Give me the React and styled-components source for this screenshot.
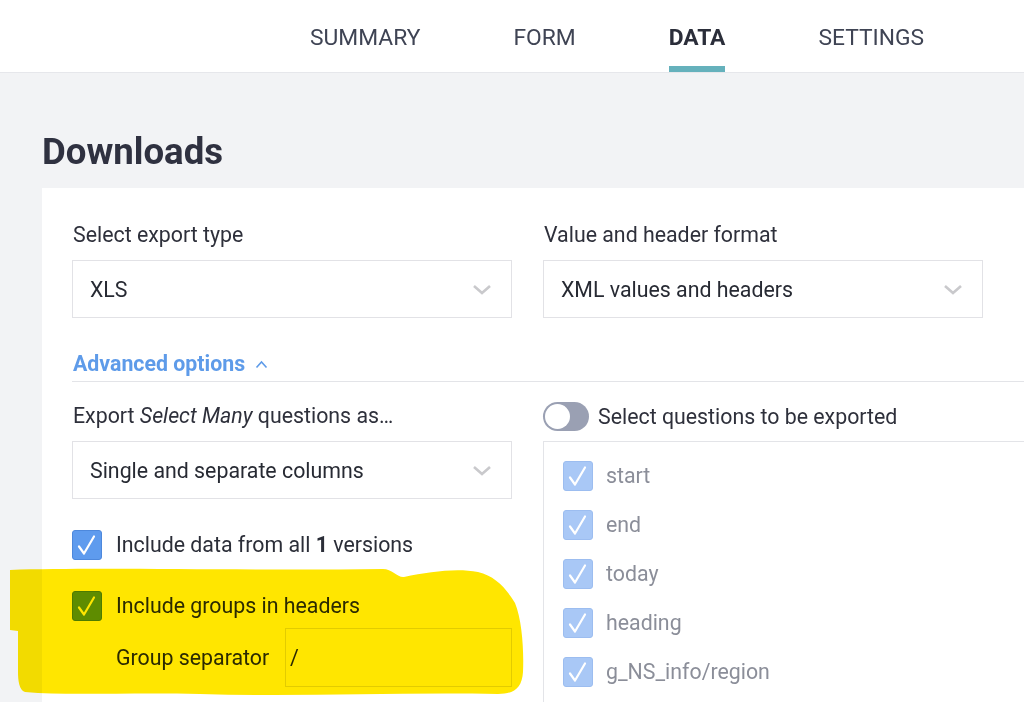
import styled, { createGlobalStyle } from "styled-components";

const GlobalStyle = createGlobalStyle`
  html, body {
    margin: 0;
    padding: 0;
    background: #f2f3f5;
    font-family: Roboto, "Liberation Sans", sans-serif;
    overflow: hidden;
  }
  * { box-sizing: border-box; }
`;

const Page = styled.div`
  position: relative;
  width: 1024px;
  height: 702px;
  overflow: hidden;
`;

const Header = styled.nav`
  height: 73px;
  background: #fff;
  border-bottom: 1px solid #e6e7eb;
  display: flex;
  padding-left: 310px;
  gap: 93px;
`;

const Tab = styled.div`
  height: 72px;
  padding-top: 2px;
  display: flex;
  align-items: center;
  font-size: 22.8px;
  color: ${(p) => (p.$active ? "#2b2e3a" : "#3f4454")};
  font-weight: ${(p) => (p.$active ? 700 : 400)};
  box-shadow: ${(p) => (p.$active ? "inset 0 -6px 0 #65b1bc" : "none")};
`;

const Main = styled.main`
  padding: 57px 0 0 42px;
`;

const Title = styled.h1`
  margin: 0 0 14px;
  font-size: 36.6px;
  line-height: 44px;
  font-weight: 700;
  color: #2f3140;
`;

const Card = styled.section`
  background: #fff;
  width: 1040px;
  padding: 35px 0 0 30px;
  height: 560px;
  font-size: 21.33px;
`;

const Columns = styled.div`
  display: grid;
  grid-template-columns: ${(p) => (p.$wide ? "440px 1fr" : "440px 440px")};
  column-gap: 31px;
`;

const Field = styled.div`
  display: flex;
  flex-direction: column;
`;

const Label = styled.div`
  line-height: 24px;
  color: #2e303b;
  margin-bottom: 13px;
  padding-left: 1px;
`;

const Select = styled.div`
  height: 58px;
  border: 1px solid #e2e2e6;
  display: flex;
  align-items: center;
  justify-content: space-between;
  padding: 0 19px 0 17px;
  color: #272a33;
`;

const Advanced = styled.div`
  margin-top: 34px;
  padding: 0 0 5px 1px;
  border-bottom: 1px solid #e3e4e8;
  display: flex;
  align-items: center;
  gap: 10px;
  line-height: 24px;
  font-weight: 700;
  color: #5e9be9;
  margin-bottom: 22px;
`;

const ToggleRow = styled.div`
  display: flex;
  align-items: center;
  gap: 9px;
  height: 29px;
  margin-top: -2px;
  margin-bottom: 10px;
  color: #2e303b;
`;

const Track = styled.div`
  width: 46px;
  height: 29px;
  border-radius: 15px;
  background: #9aa0b3;
  padding: 2px;
  display: flex;
`;

const Knob = styled.div`
  width: 25px;
  height: 25px;
  border-radius: 50%;
  background: #fff;
`;

const Checks = styled.div`
  display: flex;
  flex-direction: column;
  gap: 32px;
  margin-top: 31px;
`;

const CheckRow = styled.div`
  display: flex;
  align-items: center;
  gap: ${(p) => (p.$muted ? "13px" : "14px")};
  height: 29px;
  color: ${(p) => (p.$muted ? "#8b8e99" : "#2b2e38")};
`;

const Box = styled.div`
  width: 30px;
  height: 30px;
  border-radius: 3px;
  flex: none;
  display: flex;
  align-items: center;
  justify-content: center;
  background: ${(p) => (p.$muted ? "#a9c8f6" : "#5e9bee")};
  border: 1px solid ${(p) => (p.$muted ? "#9cbdf0" : "#4d88dc")};
`;

const SepRow = styled.div`
  display: flex;
  align-items: center;
  margin-top: -24px;
  padding-left: 44px;
  color: #2b2e38;
`;

const SepLabel = styled.span`
  width: 169px;
`;

const SepInput = styled.div`
  width: 227px;
  height: 59px;
  border: 1px solid #e2e2e6;
  display: flex;
  align-items: center;
  padding-left: 4px;
`;

const QuestionBox = styled.div`
  border: 1px solid #e3e4e8;
  border-right: none;
  padding: 19px 0 0 19px;
  display: flex;
  flex-direction: column;
  gap: 20px;
  height: 300px;
`;

const Highlight = styled.svg`
  position: absolute;
  top: 0;
  left: 0;
  pointer-events: none;
  mix-blend-mode: multiply;
`;

const Chevron = () => (
  <svg width="20" height="11" viewBox="0 0 20 11">
    <path d="M2 2 L10 9 L18 2" fill="none" stroke="#c9c9cc" strokeWidth="2.6" />
  </svg>
);

const Caret = () => (
  <svg width="13" height="9" viewBox="0 0 13 9">
    <path d="M1.5 7.5 L6.5 2 L11.5 7.5" fill="none" stroke="#5e9be9" strokeWidth="1.6" />
  </svg>
);

const Checkbox = ({ muted }) => (
  <Box $muted={muted}>
    <svg width="22" height="22" viewBox="0 0 22 22">
      <path d="M3 12.5 L8 19.5 L18 2.5" fill="none" stroke="#fff" strokeWidth="2.2" strokeLinecap="round" strokeLinejoin="round" />
    </svg>
  </Box>
);

const questions = ["start", "end", "today", "heading", "g_NS_info/region"];

const App = () => (
  <Page>
    <GlobalStyle />
    <Header>
      <Tab>SUMMARY</Tab>
      <Tab>FORM</Tab>
      <Tab $active>DATA</Tab>
      <Tab>SETTINGS</Tab>
    </Header>
    <Main>
      <Title>Downloads</Title>
      <Card>
        <Columns>
          <Field>
            <Label>Select export type</Label>
            <Select>
              XLS
              <Chevron />
            </Select>
          </Field>
          <Field>
            <Label>Value and header format</Label>
            <Select>
              XML values and headers
              <Chevron />
            </Select>
          </Field>
        </Columns>
        <Advanced>
          Advanced options
          <Caret />
        </Advanced>
        <Columns $wide>
          <Field>
            <Label>
              Export <i>Select Many</i> questions as…
            </Label>
            <Select>
              Single and separate columns
              <Chevron />
            </Select>
            <Checks>
              <CheckRow>
                <Checkbox />
                <span>
                  Include data from all <b>1</b> versions
                </span>
              </CheckRow>
              <CheckRow>
                <Checkbox />
                Include groups in headers
              </CheckRow>
              <SepRow>
                <SepLabel>Group separator</SepLabel>
                <SepInput>/</SepInput>
              </SepRow>
            </Checks>
          </Field>
          <Field>
            <ToggleRow>
              <Track>
                <Knob />
              </Track>
              Select questions to be exported
            </ToggleRow>
            <QuestionBox>
              {questions.map((q) => (
                <CheckRow key={q} $muted>
                  <Checkbox muted />
                  {q}
                </CheckRow>
              ))}
            </QuestionBox>
          </Field>
        </Columns>
      </Card>
    </Main>
    <Highlight width="1024" height="702" viewBox="0 0 1024 702">
      <path
        d="M10 570 C100 567 250 571 383 569 C392 569 398 578 404 577 C430 572 455 568 478 572 C495 576 506 588 515 603 C522 620 524 650 523 672 C522 688 514 694 498 694 C400 692 300 697 200 694 C130 692 70 696 25 692 C19 690 18 680 18 672 L18 631 L10 630 Z"
        fill="#ffe600"
      />
    </Highlight>
  </Page>
);

export default App;
